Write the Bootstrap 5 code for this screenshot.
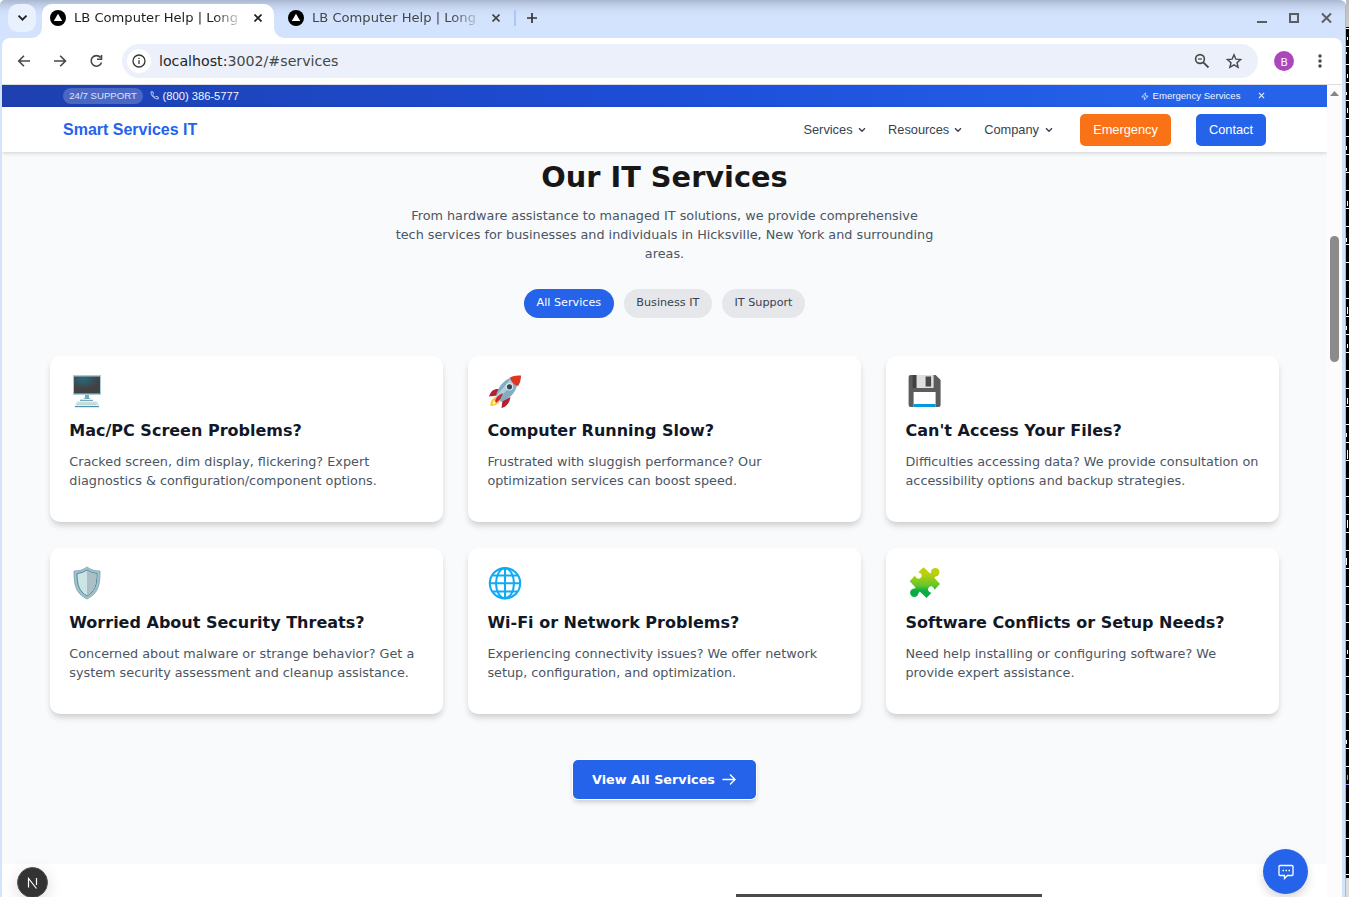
<!DOCTYPE html>
<html lang="en">
<head>
<meta charset="utf-8">
<title>LB Computer Help | Long Island</title>
<link href="https://cdn.jsdelivr.net/npm/bootstrap@5.3.0/dist/css/bootstrap.min.css" rel="stylesheet">
<script src="https://cdn.jsdelivr.net/npm/bootstrap@5.3.0/dist/js/bootstrap.bundle.min.js"></script>
<style>
body{width:1349px;height:897px;overflow:hidden;font-family:"DejaVu Sans",sans-serif;font-size:12.8px;line-height:19.2px;background:#fff}
svg{display:block;flex:none}
.win{width:1346px;height:897px;background:#d3e2fd;padding:0 3px 0 2px;border-right:1px solid #a9b9d3;border-radius:5px 6px 0 0}
.desk{width:3px;height:897px;background:linear-gradient(#bbb,#ccc 27px,transparent 27px,transparent 878px,#ddd 878px),repeating-linear-gradient(#000 0 10px,#fff 10px 11px,#000 11px 18px)}
.strip{height:38px;margin:0 -3px 0 -2px;background:linear-gradient(#a9b8d1,#bfcde6 5px,#cddcf6 10px,#d3e2fd 17px);border-radius:5px 6px 0 0;color:#454746}
.finder{width:28px;height:28px;margin:4px 0 0 8px;border-radius:10px;background:#e9f0fe}
.tabx{height:34px;margin-top:4px;font-size:13.1px;padding-top:1px}
.tab-on{width:232px;margin-left:6px;padding-left:8px;background:#fff;border-radius:10px 10px 0 0;color:#1f1f1f;position:relative}
.tab-on:before,.tab-on:after{content:"";position:absolute;bottom:0;width:10px;height:10px}
.tab-on:before{left:-10px;background:radial-gradient(circle at 0 0,transparent 9.5px,#fff 10px)}
.tab-on:after{right:-10px;background:radial-gradient(circle at 100% 0,transparent 9.5px,#fff 10px)}
.tabtext{width:163px;margin-left:8px;white-space:nowrap;-webkit-mask-image:linear-gradient(90deg,#000 140px,rgba(0,0,0,.25) 163px)}
.tool{height:46px;background:#fff;border-radius:8px 8px 0 0;color:#454746}
.omni{width:1136px;height:34px;border-radius:17px;background:#ebf0fa;font-size:14.2px;margin-left:16px}
.info{width:24px;height:24px;margin-left:5px;background:#fff}
.avatar{width:20px;height:20px;background:#ab47bc;color:#fff;font:11px "Noto Sans",sans-serif;margin-left:16px}
.view{height:813px;border-top:1px solid #dcdde0;background:#fff}
.page{width:1325px;height:812px;position:relative;overflow:hidden}
.bar{width:15px;background:#fcfcfc;padding-top:6px}
.thumb{width:9px;height:126px;border-radius:5px;background:#8b8b8b;margin:140px 0 0 3px}
.arial{font-family:"Liberation Sans",sans-serif}
.top{height:22px;background:linear-gradient(90deg,#1e40af,#1d4ed8 50%,#2563eb 90%);color:#f0f5ff;padding:0 61px;font-size:9.6px;line-height:16px}
.tag{width:80px;height:16px;background:rgba(255,255,255,.2);border-radius:8px;text-align:center;color:#dbe4fa}
.menu{height:45px;padding:0 61px;background:#fff;box-shadow:0 1px 4px rgba(0,0,0,.18);position:relative;color:#374151}
.menu .brandname{font-size:16px;font-weight:700;color:#2563eb}
.cta{height:32px;border-radius:5px;color:#fff;line-height:32px;text-align:center}
.services{background:#f9fafb;height:712px;padding-top:9px;color:#4b5563}
.services h2{font-size:28.8px;line-height:32px;font-weight:700;color:#171717;margin:0 0 12.5px}
.intro{margin:0 0 26px}
.pill{height:29px;line-height:27px;border-radius:15px;background:#e5e7eb;color:#374151;padding:0 12.8px;font-size:11.2px}
.pill-on{background:#2563eb;color:#fff}
.cards{display:grid;grid-template-columns:repeat(3,392.53px);gap:26px 25.6px;margin:38px 0 0 48.1px}
.svc{height:166px;border-radius:10px;background:#fff;padding:15px 19.2px;box-shadow:0 4px 6px -1px rgba(0,0,0,.13),0 5px 8px -2px rgba(0,0,0,.08)}
.svc h3{font-size:16px;line-height:22px;font-weight:700;color:#111827;margin:9px 0 10px}
.svc p{margin:0;white-space:nowrap}
.more{width:183px;height:39px;background:#2563eb;border-radius:5px;margin:46px auto 0;color:#fff;font-weight:700;box-shadow:0 0 0 1px #fff,0 3px 5px rgba(0,0,0,.2)}
.next{position:absolute;left:15px;top:782px;width:31px;height:31px;background:#333;border:1px solid #555;color:#fff;box-shadow:0 4px 16px rgba(0,0,0,.14)}
.chat{position:absolute;left:1261px;top:764px;width:45px;height:45px;background:#2563eb;box-shadow:0 5px 10px rgba(0,0,0,.15)}
.peek{width:306px;height:3px;background:#4b4b4b;margin:30px 0 0 734px}
</style>
</head>
<body class="d-flex">
<svg width="0" height="0" class="position-absolute"><defs>
<symbol id="fav" viewBox="0 0 16 16"><circle cx="8" cy="8" r="8" fill="#000"/><path d="M8 3.7 12.2 11H3.8Z" fill="#fff"/></symbol>
<symbol id="x" viewBox="0 0 8 8"><path d="M.5.5 7.5 7.5M7.5.5.5 7.5" stroke="currentColor" stroke-width="1.7"/></symbol>
<symbol id="down" viewBox="0 0 8 6"><path d="M1 1.2 4 4.2 7 1.2" fill="none" stroke="currentColor" stroke-width="1.4"/></symbol>
</defs></svg>
<div class="win">
 <div class="strip d-flex align-items-start">
  <div class="finder d-flex align-items-center justify-content-center"><svg width="11" height="8" viewBox="0 0 11 8"><path d="m1.500 1.700 4 4 4-4" fill="none" stroke="#1f1f1f" stroke-width="1.800"/></svg></div>
  <div class="tabx tab-on d-flex"><svg width="16" height="16" style="margin-top:5px"><use href="#fav"/></svg><div class="tabtext" style="margin-top:3px">LB Computer Help | Long</div><svg width="8" height="8" style="margin:9px 0 0 17px"><use href="#x"/></svg></div>
  <div class="tabx d-flex" style="margin-left:14px"><svg width="16" height="16" style="margin-top:5px"><use href="#fav"/></svg><div class="tabtext" style="margin-top:3px">LB Computer Help | Long</div><svg width="8" height="8" style="margin:9px 0 0 17px"><use href="#x"/></svg></div>
  <svg width="30" height="18" style="margin:9px 0 0 14px"><path d="M1 1v16" stroke="#a8c7fa" stroke-width="2"/><path d="M18 4v10M13 9h10" stroke="#333" stroke-width="1.700"/></svg>
  <svg width="80" height="16" class="ms-auto" style="margin-top:10px;margin-right:9px" fill="none" stroke="#5b5d61" stroke-width="2"><path d="M1 12h10M66 3.500l9 9M75 3.500l-9 9"/><rect x="34" y="4" width="8" height="8"/></svg>
 </div>
 <div class="tool d-flex align-items-center">
  <svg width="104" height="20" fill="none" stroke="#474747" stroke-width="1.600"><path d="M28 10H17m5-5.300L16.700 10l5.300 5.300M52 10h11.500m-5.300-5.300 5.300 5.300-5.300 5.300M98.500 6.500a5.300 5.300 0 1 0 1 5M99.500 4v4.200h-4.500"/></svg>
  <div class="omni d-flex align-items-center"><div class="info rounded-circle d-flex align-items-center justify-content-center"><svg width="14" height="14" fill="none" stroke="#333" stroke-width="1.300"><circle cx="7" cy="7" r="6"/><path d="M7 6.300V10M7 3.700v1.400"/></svg></div><span style="margin:1px 0 0 8px"><span class="text-dark">localhost:</span>3002/#services</span>
   <svg width="50" height="18" class="ms-auto" style="margin-right:14px" fill="none" stroke="#474747"><circle cx="6" cy="7" r="4.400" stroke-width="1.600"/><path d="M9.300 10.300 14.500 15.500" stroke-width="1.800"/><path d="M4 7h4" stroke-width="1.200"/><path d="m40 2.800 1.900 4.400 4.700.4-3.600 3.100 1.100 4.600-4.100-2.500-4.100 2.500 1.100-4.600-3.600-3.100 4.700-.4Z" stroke-width="1.400"/></svg></div>
  <div class="avatar rounded-circle d-flex align-items-center justify-content-center">B</div>
  <svg width="4" height="16" style="margin-left:24px" fill="#474747"><circle cx="2" cy="3" r="1.700"/><circle cx="2" cy="8" r="1.700"/><circle cx="2" cy="13" r="1.700"/></svg>
 </div>
 <div class="view d-flex">
  <div class="page">
   <div class="top arial d-flex align-items-center"><span class="tag">24/7 SUPPORT</span>
    <svg width="9" height="9" viewBox="0 0 9 9" style="margin:-2px 0 0 7px" fill="none" stroke="#cfdcff" stroke-width=".9"><path d="M1 .8h1.800L3.500 3l-1 .8c.5 1.200 1.400 2 2.500 2.600L6 5.300l2.300.8v1.800C4.500 8.300.7 4.600 1 .8Z"/></svg>
    <span style="font-size:11.2px;margin-left:3.500px">(800) 386-5777</span>
    <svg width="8" height="9" viewBox="0 0 8 9" class="ms-auto" fill="none" stroke="#dbe5ff" stroke-width=".8"><path d="M4.500.8.8 5h2.800L3.300 8 7.200 4H4.300Z"/></svg><span style="margin-left:4px">Emergency Services</span>
    <svg width="7" height="7" style="margin:-1px 1px 0 17.500px;color:#eef3ff" viewBox="0 0 8 8"><path d="m1 1 6 6M7 1 1 7" stroke="currentColor" stroke-width="1.200"/></svg></div>
   <div class="menu arial d-flex align-items-center"><span class="brandname">Smart Services IT</span>
    <span class="ms-auto">Services</span><svg width="8" height="6" style="margin-left:5.500px"><use href="#down"/></svg>
    <span style="margin-left:22px">Resources</span><svg width="8" height="6" style="margin-left:5px"><use href="#down"/></svg>
    <span style="margin-left:22px">Company</span><svg width="8" height="6" style="margin-left:5.500px"><use href="#down"/></svg>
    <div class="cta" style="width:91px;margin-left:27.500px;background:#f97316">Emergency</div><div class="cta" style="width:70px;margin-left:25px;background:#2563eb">Contact</div></div>
   <div class="services"><div class="text-center"><h2>Our IT Services</h2><p class="intro">From hardware assistance to managed IT solutions, we provide comprehensive<br>tech services for businesses and individuals in Hicksville, New York and surrounding<br>areas.</p>
    <div class="d-flex justify-content-center" style="gap:9.600px"><span class="pill pill-on">All Services</span><span class="pill">Business IT</span><span class="pill">IT Support</span></div></div>
    <div class="cards">
     <div class="svc"><svg width="36" height="40" viewBox="0 0 36 40"><defs><radialGradient id="scr" cx=".35" cy=".15" r=".6"><stop stop-color="#28697a"/><stop offset="1" stop-color="#424242"/></radialGradient></defs><path d="M4 4h28v20H4Z" fill="#a8cddd"/><path d="M5 5.500h26V22.500H5Z" fill="url(#scr)"/><path d="M16 24h4v3l4 2v1H11v-1l5-2Z" fill="#78aabd"/><path d="M13 28h10v1H13Z" fill="#e1f2f6"/><path d="M8 30.500h20l2 4H6Z" fill="#d5e3e8"/><path d="M9 32h18M8 33.500h20" stroke="#a9bfc8" stroke-width=".7" stroke-dasharray="1.500 1"/><path d="M6 35h24v1.200H6Z" fill="#4795a8"/></svg>
      <h3>Mac/PC Screen Problems?</h3><p>Cracked screen, dim display, flickering? Expert<br>diagnostics &amp; configuration/component options.</p></div>
     <div class="svc"><svg width="36" height="40" viewBox="0 0 36 40"><path d="M9 26c-4 1-6 5-5.500 9 5-.5 9-2 9.500-6Z" fill="#ffc62c"/><path d="M8 29c-2 1-2.500 3-2.500 4.500 2.500-.5 4.500-1.500 5.500-4Z" fill="#fff4aa"/><path d="M13 18c-7-.5-9 2-11 7.500l8.500-1ZM21.500 27l-6 2-1 8c5-1 8-5 9-11Z" fill="#b91f32"/><path d="M9 25c2-10 9-17 17-19l5 5c-2 10-7 16-17 20Z" fill="#82aebf"/><path d="M9 25 24.500 7l4 3-17 18Z" fill="#b0d0db"/><path d="M23 6.500c4-2 8-2 11-2 0 4-1 7.500-3 10.500-4-1-7-4-8-8.500Z" fill="#df3522"/><circle cx="22.500" cy="15.800" r="3.800" fill="#d5e5eb"/><circle cx="22.500" cy="15.800" r="2.600" fill="#37474f"/><path d="M8 30c1-4 4-6 8-8-1 4-3 7-7 10Z" fill="#c62839"/></svg>
      <h3>Computer Running Slow?</h3><p>Frustrated with sluggish performance? Our<br>optimization services can boost speed.</p></div>
     <div class="svc"><svg width="36" height="40" viewBox="-.6 0 36 40"><path d="M4 4h25l5 5v25a2 2 0 0 1-2 2H4a2 2 0 0 1-2-2V6a2 2 0 0 1 2-2Z" fill="#5c5c5c"/><path d="M6 4h4v13H6Z" fill="#404040"/><path d="M10 4h17v13H10Z" fill="#dedede"/><path d="M19 5.500h5.500v10H19Z" fill="#484848"/><path d="M7 21h22v15H7Z" fill="#fff"/><path d="M7 33h22v3H7Z" fill="#0398df"/></svg>
      <h3>Can't Access Your Files?</h3><p>Difficulties accessing data? We provide consultation on<br>accessibility options and backup strategies.</p></div>
     <div class="svc"><svg width="36" height="40" viewBox="0 0 36 40"><path d="M18 4c4 3 8 4 13 4 0 13-1 22-13 28C6 30 5 21 5 8c5 0 9-1 13-4Z" fill="#a8bfc8" stroke="#6fa4b8" stroke-width=".8"/><path d="M18 7c3 2 6 3 10 3.500 0 11-2 18-10 22.500C10 28.500 8 21.500 8 10.500 12 10 15 9 18 7Z" fill="#cce4e6" stroke="#458b9f"/><path d="M18 7.500c3 2 6 3 9.500 3.400 0 11-2 17-9.500 21.600Z" fill="#adbfc6"/></svg>
      <h3>Worried About Security Threats?</h3><p>Concerned about malware or strange behavior? Get a<br>system security assessment and cleanup assistance.</p></div>
     <div class="svc"><svg width="36" height="40" viewBox="0 0 36 40" fill="none" stroke="#12aaf4" stroke-width="2.100"><circle cx="18" cy="20.300" r="15.200"/><ellipse cx="18" cy="20.300" rx="9" ry="15"/><path d="M18 5v30M3 20.300h30M6 12.500h24M6 28.500h24"/></svg>
      <h3>Wi-Fi or Network Problems?</h3><p>Experiencing connectivity issues? We offer network<br>setup, configuration, and optimization.</p></div>
     <div class="svc"><svg width="36" height="40" viewBox="0 0 36 40"><defs><linearGradient id="pz" gradientUnits="userSpaceOnUse" x1="0" y1="4" x2="0" y2="36"><stop offset=".2" stop-color="#bcd10c"/><stop offset=".58" stop-color="#66c52a"/><stop offset=".75" stop-color="#06ad43"/></linearGradient></defs><g fill="url(#pz)"><path d="M17.500 4.200 24.200 10.500 27 8.500 30.500 12 28.300 14.800 34 21 28.500 26.800C27.500 23.500 25 22.300 23 24.200 21 26.300 22.300 29 25.500 29.800L20.500 35 13.800 28.500 11 31.500 7 28 9.500 24.500 3.700 18.200 9 12.500C10 15.800 12.800 16.800 14.800 14.800 16.800 12.800 15.500 10 12.300 9.200Z"/><circle cx="29.200" cy="9.300" r="4.200"/><circle cx="8.300" cy="29.800" r="4.200"/></g></svg>
      <h3>Software Conflicts or Setup Needs?</h3><p>Need help installing or configuring software? We<br>provide expert assistance.</p></div>
    </div>
    <div class="more d-flex align-items-center justify-content-center">View All Services<svg width="15" height="12" style="margin-left:7px" fill="none" stroke="#fff" stroke-width="1.300"><path d="M.5 5.500h12.500M8 .5l5 5-5 5"/></svg></div>
   </div>
   <div class="peek"></div>
   <div class="next rounded-circle d-flex align-items-center justify-content-center"><svg width="11" height="12" fill="none" stroke="#fff" stroke-width="1.200"><path d="M1.500 10.500V1.500L9.500 11.500M9.500 1v7"/></svg></div>
   <div class="chat rounded-circle d-flex align-items-center justify-content-center"><svg width="16" height="16" fill="none" stroke="#fff" stroke-width="1.300"><path d="M2 1.500h12a1 1 0 0 1 1 1v8a1 1 0 0 1-1 1H9.500L6.500 14.500v-3H2a1 1 0 0 1-1-1v-8a1 1 0 0 1 1-1Z"/><path d="M4.500 6.500H6M7.500 6.500H9M10.500 6.500H12"/></svg></div>
  </div>
  <div class="bar"><svg width="9" height="5" style="margin-left:3px"><path d="M0 5 4.500 0 9 5Z" fill="#858585"/></svg><div class="thumb"></div></div>
 </div>
</div>
<div class="desk" aria-hidden="true"><svg width="3" height="897" stroke="#fff" fill="none"><path d="M1.500 37v3M.5 52v2M1.500 74v4M.5 92v3M1.500 108v5M.5 146v4M.5 168v3M1.500 201v5M.5 238v4M1.500 307v7M.5 326v4M1.500 344v4M1.500 398v6M.5 433v4M1.500 450v9M1.500 520v8M.5 558v7M1.500 650v4M.5 740v4"/><path d="M1.500 775v5M0 784.500h3" stroke="#a78bfa"/></svg></div>
</body>
</html>
